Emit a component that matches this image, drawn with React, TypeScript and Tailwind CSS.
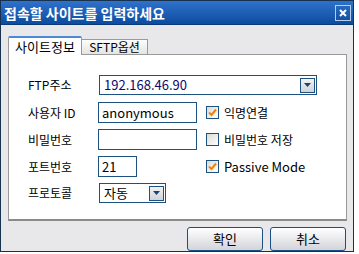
import React from "react";

const font = { fontFamily: '"Noto Sans CJK KR", "Liberation Sans", sans-serif' };

function Check({ checked }: { checked: boolean }) {
  return (
    <div className="w-[13px] h-[13px] border border-[#1c5180] bg-gradient-to-br from-[#dcdcd6] to-[#ffffff] flex items-center justify-center">
      {checked && (
        <svg width="9" height="9" viewBox="0 0 9 9">
          <path d="M1 4.5 L3.5 7 L8 1.5" stroke="#f0820f" strokeWidth="2" fill="none" />
        </svg>
      )}
    </div>
  );
}

function DropBtn() {
  return (
    <div className="w-[15px] h-[15px] border border-[#1c5180] bg-gradient-to-b from-[#f2f2f0] to-[#cfd3da] flex items-center justify-center">
      <svg width="7" height="4" viewBox="0 0 7 4">
        <path d="M0 0 H7 L3.5 4 Z" fill="#1c3f78" />
      </svg>
    </div>
  );
}

export default function App() {
  return (
    <div className="w-[359px] h-[254px] bg-white relative overflow-hidden" style={font}>
      <div className="w-[354px] h-[252px] border border-[#16324f] flex flex-col bg-[#e8e8eb]">
        <div className="h-[24px] bg-gradient-to-b from-[#2f72cc] to-[#0b4c9f] border-b border-[#0b3a78] flex items-center justify-between pl-[3px] pr-[2px]">
          <span className="text-white font-bold text-[14px] leading-none">접속할 사이트를 입력하세요</span>
          <div className="w-[16px] h-[16px] border border-[#b8cde8] flex items-center justify-center">
            <svg width="8" height="8" viewBox="0 0 8 8">
              <path d="M1 1 L7 7 M7 1 L1 7" stroke="white" strokeWidth="2" />
            </svg>
          </div>
        </div>
        <div className="flex-1 flex flex-col pl-[7px] pr-[6px] pt-[10px]">
          <div className="flex items-end h-[19px]">
            <div className="h-[19px] w-[74px] bg-white border border-b-0 border-[#9a9a9a] border-t-2 border-t-[#4a8ad6] rounded-t-[2px] flex items-center justify-center text-[13px] text-black relative z-10 -mb-px">
              사이트정보
            </div>
            <div className="h-[15px] w-[66px] bg-gradient-to-b from-[#fdfdfd] to-[#e4e4e0] border border-b-0 border-l-0 border-[#9a9a9a] flex items-center justify-center text-[12px] text-black">
              SFTP옵션
            </div>
          </div>
          <div className="h-[167px] bg-white border border-[#9a9a9a] border-b-2 border-b-[#8a8a8a] pl-[19px] pt-[20px] text-[12px] text-black">
            <div className="flex items-center h-[20px]">
              <span className="w-[71px]">FTP주소</span>
              <div className="w-[218px] h-[20px] border border-[#1c5180] flex items-center justify-between pl-[4px] pr-[1px]">
                <span className="text-[#0a0a6e] text-[13px]">192.168.46.90</span>
                <DropBtn />
              </div>
            </div>
            <div className="flex items-center h-[21px] mt-[7px]">
              <span className="w-[70px]">사용자 ID</span>
              <div className="w-[99px] h-[21px] border border-[#1c5180] flex items-center pl-[3px] text-[13px]">anonymous</div>
              <div className="ml-[9px] flex items-center gap-[5px]">
                <Check checked />
                <span>익명연결</span>
              </div>
            </div>
            <div className="flex items-center h-[21px] mt-[6px]">
              <span className="w-[70px]">비밀번호</span>
              <div className="w-[99px] h-[21px] border border-[#1c5180]" />
              <div className="ml-[9px] flex items-center gap-[5px]">
                <Check checked={false} />
                <span>비밀번호 저장</span>
              </div>
            </div>
            <div className="flex items-center h-[21px] mt-[6px]">
              <span className="w-[70px]">포트번호</span>
              <div className="w-[39px] h-[21px] border border-[#1c5180] flex items-center pl-[3px] text-[13px]">21</div>
              <div className="ml-[69px] flex items-center gap-[5px]">
                <Check checked />
                <span className="text-[13px]">Passive Mode</span>
              </div>
            </div>
            <div className="flex items-center h-[20px] mt-[6px]">
              <span className="w-[71px]">프로토콜</span>
              <div className="w-[67px] h-[20px] border border-[#1c5180] flex items-center justify-between pl-[4px] pr-[1px]">
                <span className="text-[13px]">자동</span>
                <DropBtn />
              </div>
            </div>
          </div>
          <div className="flex justify-end gap-[7px] mt-[6px] pr-[1px]">
            <button className="w-[76px] h-[24px] rounded-[3px] border border-[#1c4f86] bg-gradient-to-b from-[#ffffff] to-[#d3d4d9] text-[13px] text-black">확인</button>
            <button className="w-[76px] h-[24px] rounded-[3px] border border-[#1c4f86] bg-gradient-to-b from-[#ffffff] to-[#d3d4d9] text-[13px] text-black">취소</button>
          </div>
        </div>
      </div>
    </div>
  );
}
